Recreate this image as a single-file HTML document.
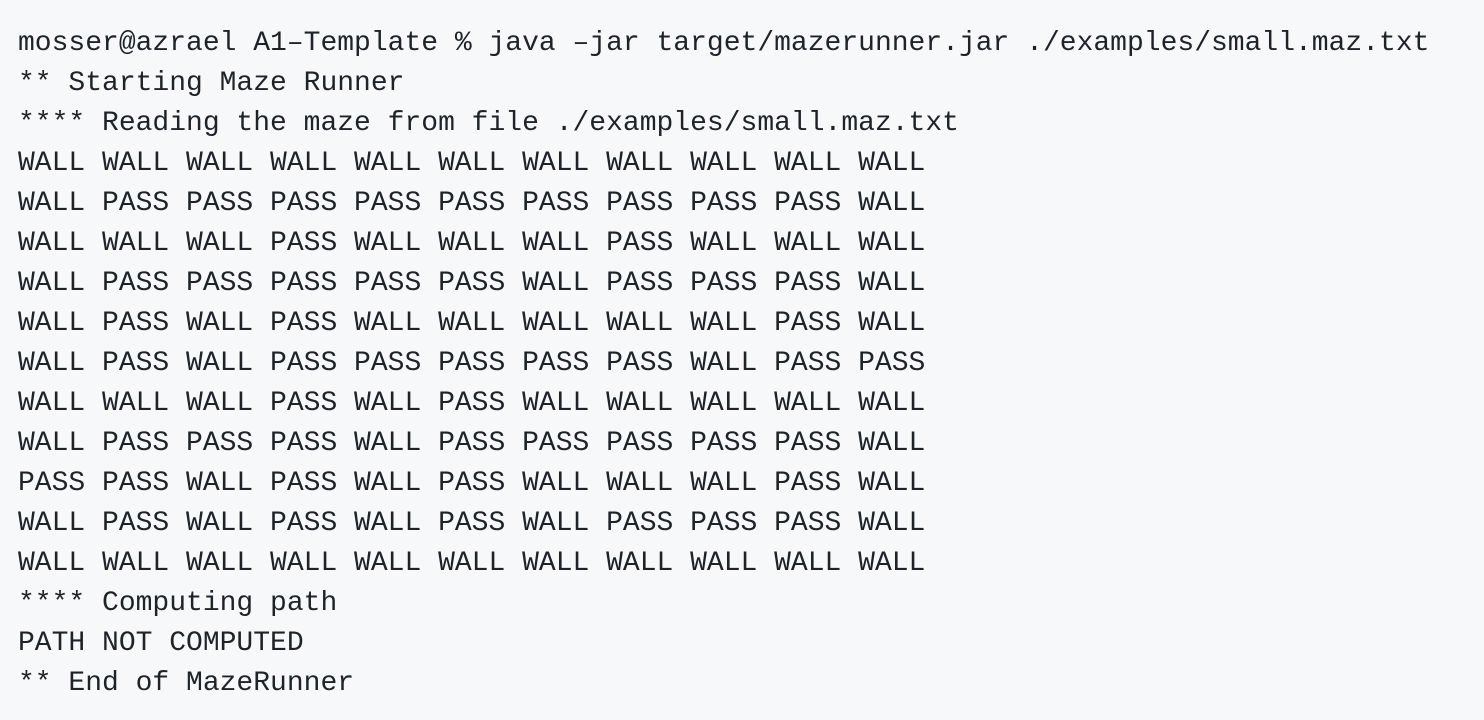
<!DOCTYPE html>
<html><head><meta charset="utf-8"><style>
html,body{margin:0;padding:0;width:1484px;height:720px;background:#f6f8fa;overflow:hidden}
pre{margin:0;padding:24px 0 0 18px;font-family:"Liberation Mono",monospace;font-size:28px;line-height:40px;color:#1f2328;white-space:pre}
</style></head><body><pre>mosser@azrael A1–Template % java –jar target/mazerunner.jar ./examples/small.maz.txt
** Starting Maze Runner
**** Reading the maze from file ./examples/small.maz.txt
WALL WALL WALL WALL WALL WALL WALL WALL WALL WALL WALL
WALL PASS PASS PASS PASS PASS PASS PASS PASS PASS WALL
WALL WALL WALL PASS WALL WALL WALL PASS WALL WALL WALL
WALL PASS PASS PASS PASS PASS WALL PASS PASS PASS WALL
WALL PASS WALL PASS WALL WALL WALL WALL WALL PASS WALL
WALL PASS WALL PASS PASS PASS PASS PASS WALL PASS PASS
WALL WALL WALL PASS WALL PASS WALL WALL WALL WALL WALL
WALL PASS PASS PASS WALL PASS PASS PASS PASS PASS WALL
PASS PASS WALL PASS WALL PASS WALL WALL WALL PASS WALL
WALL PASS WALL PASS WALL PASS WALL PASS PASS PASS WALL
WALL WALL WALL WALL WALL WALL WALL WALL WALL WALL WALL
**** Computing path
PATH NOT COMPUTED
** End of MazeRunner</pre></body></html>
